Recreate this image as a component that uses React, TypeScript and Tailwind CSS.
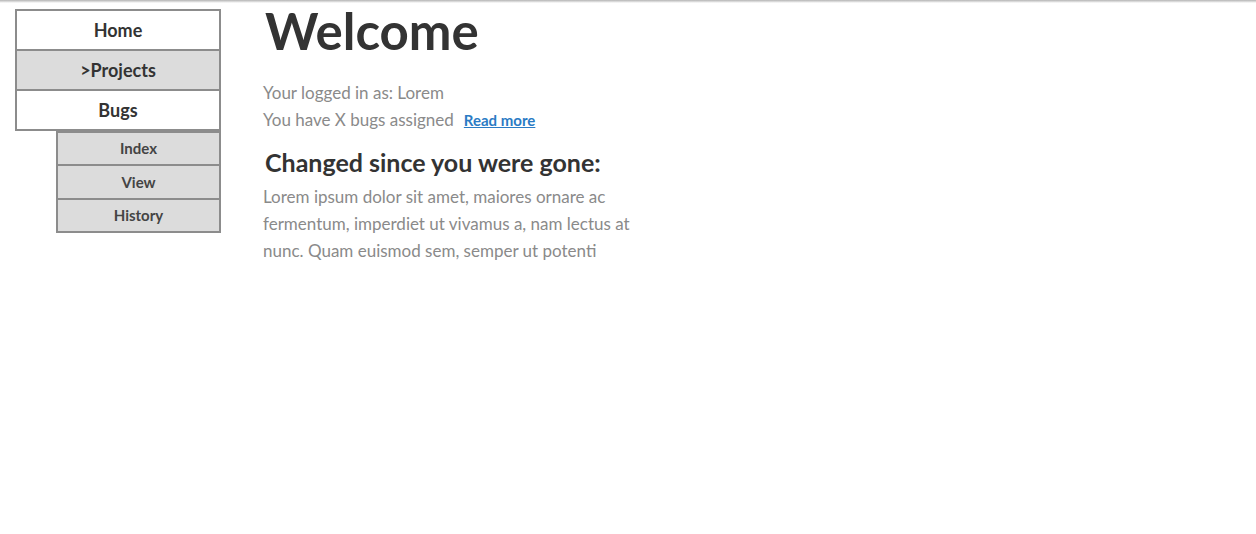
const nav = [
  { label: "Home", bg: "bg-white", h: "h-[40px]" },
  { label: ">Projects", bg: "bg-[#dcdcdc]", h: "h-[40px]" },
  { label: "Bugs", bg: "bg-white", h: "h-[38px]" },
];

const subNav = [
  { label: "Index", h: "h-[33px]" },
  { label: "View", h: "h-[34px]" },
  { label: "History", h: "h-[31px]" },
];

export default function App() {
  return (
    <div
      className="min-h-[534px] w-full bg-white"
      style={{ fontFamily: "Lato, 'Open Sans', sans-serif" }}
    >
      <div className="h-[3px] bg-gradient-to-b from-[#b4b4b4] to-white" />
      <div className="flex pt-[6px] pl-[15px]">
        <nav className="w-[206px] shrink-0">
          <div className="border-2 border-[#8c8c8c]">
            {nav.map((item, i) => (
              <div
                key={item.label}
                className={`${item.h} flex items-center justify-center text-[18px] font-bold text-[#333] ${item.bg} ${i < nav.length - 1 ? "border-b-2 border-[#8c8c8c]" : ""}`}
              >
                {item.label}
              </div>
            ))}
          </div>
          <div className="ml-[41px] border-2 border-[#8c8c8c] bg-[#dcdcdc]">
            {subNav.map((item, i) => (
              <div
                key={item.label}
                className={`${item.h} flex items-center justify-center text-[15px] font-bold text-[#444] ${i < subNav.length - 1 ? "border-b-2 border-[#8c8c8c]" : ""}`}
              >
                {item.label}
              </div>
            ))}
          </div>
        </nav>

        <main className="ml-[42px] w-[385px]">
          <h1 className="text-[51px] leading-[44px] font-bold text-[#333] pl-[2px]">Welcome</h1>
          <div className="mt-[26px] text-[17px] leading-[27px] text-[#8a8a8a]">
            <p>Your logged in as: Lorem</p>
            <p>
              You have X bugs assigned
              <a href="#" className="ml-[10px] text-[15px] font-bold text-[#2a7bc4] underline">
                Read more
              </a>
            </p>
          </div>
          <h2 className="mt-[11px] text-[25px] leading-[34px] font-bold text-[#333] pl-[2px]">
            Changed since you were gone:
          </h2>
          <p className="mt-[4px] text-[17px] leading-[27px] text-[#8a8a8a]">
            Lorem ipsum dolor sit amet, maiores ornare ac fermentum, imperdiet ut vivamus a, nam lectus at
            nunc. Quam euismod sem, semper ut potenti
          </p>
        </main>
      </div>
    </div>
  );
}
